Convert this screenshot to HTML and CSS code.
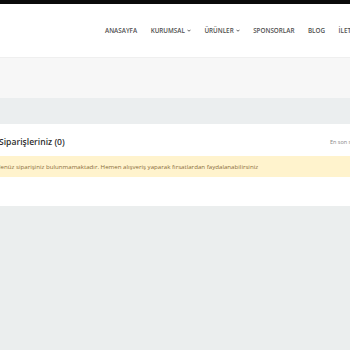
FILE: index.html
```html
<!DOCTYPE html>
<html lang="tr">
<head>
<meta charset="utf-8">
<link rel="stylesheet" href="styles.css">
</head>
<body>
<div class="topbar"></div>
<header class="header">
  <nav class="nav">
    <a class="nav-item">ANASAYFA</a>
    <a class="nav-item">KURUMSAL<svg class="caret" viewBox="0 0 8 5"><path d="M1 1l3 3 3-3" fill="none" stroke="currentColor" stroke-width="1.8"/></svg></a>
    <a class="nav-item">ÜRÜNLER<svg class="caret" viewBox="0 0 8 5"><path d="M1 1l3 3 3-3" fill="none" stroke="currentColor" stroke-width="1.8"/></svg></a>
    <a class="nav-item">SPONSORLAR</a>
    <a class="nav-item">BLOG</a>
    <a class="nav-item">İLETİŞİM</a>
  </nav>
</header>
<div class="breadcrumb-area"></div>
<div class="band"></div>
<section class="card">
  <div class="container">
    <div class="title-row">
      <h1 class="title">Siparişleriniz (0)</h1>
      <span class="sort">En son siparişler</span>
    </div>
    <div class="alert">Henüz siparişiniz bulunmamaktadır. Hemen alışveriş yaparak fırsatlardan faydalanabilirsiniz</div>
  </div>
</section>
<div class="footer-bg"></div>
</body>
</html>
```
FILE: styles.css
```css
html, body {
  margin: 0;
  padding: 0;
}
body {
  width: 350px;
  height: 350px;
  overflow: hidden;
  background: #ebeeee;
  font-family: "Open Sans", "Liberation Sans", sans-serif;
}
.topbar {
  height: 4px;
  background: #0a0a0a;
}
.header {
  height: 53px;
  background: #ffffff;
  display: flex;
  align-items: center;
}
.nav {
  display: flex;
  align-items: center;
  gap: 13.5px;
  padding-left: 105px;
  white-space: nowrap;
}
.nav-item {
  font-size: 6.3px;
  font-weight: 600;
  color: #4f4f4f;
  display: flex;
  align-items: center;
  gap: 2px;
}
.caret {
  width: 4px;
  height: 3px;
}
.breadcrumb-area {
  height: 40px;
  background: #f7f7f7;
  border-top: 1px solid #efefef;
}
.band {
  height: 26px;
  background: #ebeeef;
}
.card {
  background: #ffffff;
  height: 82px;
  overflow: hidden;
}
.container {
  margin-left: -12px;
  width: 420px;
  padding-top: 9px;
}
.title-row {
  display: flex;
  justify-content: space-between;
  align-items: center;
  padding-left: 11px;
  height: 18px;
}
.title {
  margin: 0;
  font-size: 8.6px;
  font-weight: 600;
  color: #2f2f2f;
}
.sort {
  font-size: 5.5px;
  color: #888888;
  width: 78px;
}
.alert {
  margin-top: 5px;
  background: #fff3cd;
  color: #8a6d3b;
  font-size: 6.15px;
  height: 21px;
  line-height: 21px;
  padding-left: 8px;
  white-space: nowrap;
}
.footer-bg {
  height: 150px;
  background: #ebeeee;
}
```
